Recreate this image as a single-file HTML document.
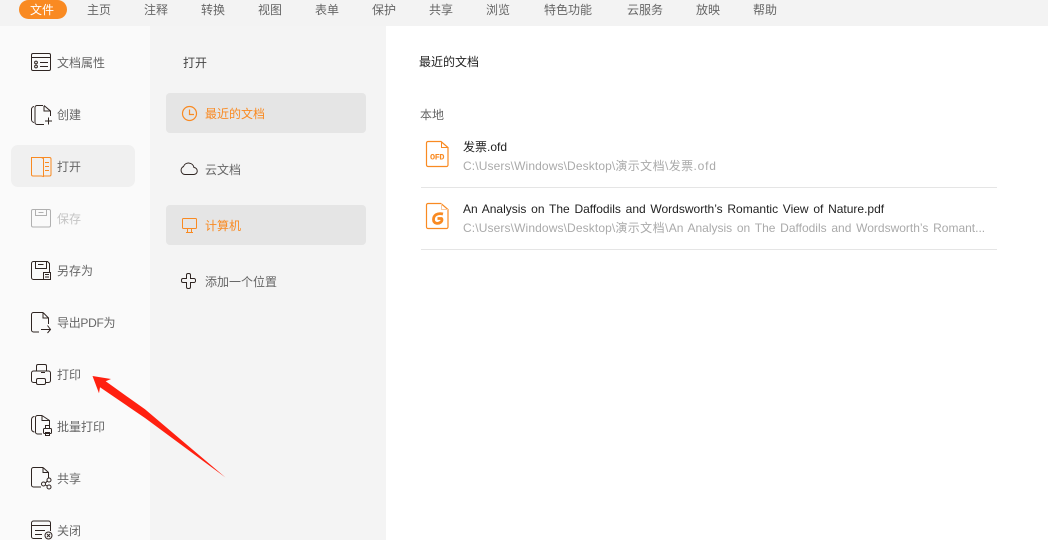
<!DOCTYPE html>
<html lang="zh">
<head>
<meta charset="utf-8">
<title>文件</title>
<style>
html,body{margin:0;padding:0;width:1048px;height:540px;overflow:hidden;background:#fff}
body{position:relative;font-family:"Liberation Sans","WenQuanYi Zen Hei","Noto Sans CJK SC",sans-serif;font-size:12px;color:#666}
.b{position:absolute}
.t{position:absolute;white-space:nowrap;line-height:16px;height:16px}
svg{position:absolute;left:0;top:0;overflow:visible}
.c{color:#666}
.o{color:#f98a22}
.k{color:#222}
.g{color:#aaa}
.cj{letter-spacing:.4px}
.la{letter-spacing:.12px}
</style>
</head>
<body>
<div class="b" style="left:0;top:0;width:1048px;height:26px;background:#f3f3f3"></div>
<div class="b" style="left:0;top:26px;width:150px;height:514px;background:#fafafa"></div>
<div class="b" style="left:150px;top:26px;width:236px;height:514px;background:#f4f4f4"></div>
<div class="b" style="left:19px;top:0;width:48px;height:19px;background:#f98a22;border-radius:10px"></div>
<div class="b" style="left:11px;top:145px;width:124px;height:42px;background:#f0f0f0;border-radius:7px"></div>
<div class="b" style="left:166px;top:93px;width:200px;height:40px;background:#e5e5e5;border-radius:4px"></div>
<div class="b" style="left:166px;top:205px;width:200px;height:40px;background:#e5e5e5;border-radius:4px"></div>
<div class="b" style="left:421px;top:187px;width:576px;height:1px;background:#e5e5e5"></div>
<div class="b" style="left:421px;top:249px;width:576px;height:1px;background:#e5e5e5"></div>

<div class="t" style="left:30px;top:2px;color:#fff">文件</div>
<div class="t c" style="left:87px;top:2px">主页</div>
<div class="t c" style="left:144px;top:2px">注释</div>
<div class="t c" style="left:201px;top:2px">转换</div>
<div class="t c" style="left:258px;top:2px">视图</div>
<div class="t c" style="left:315px;top:2px">表单</div>
<div class="t c" style="left:372px;top:2px">保护</div>
<div class="t c" style="left:429px;top:2px">共享</div>
<div class="t c" style="left:486px;top:2px">浏览</div>
<div class="t c" style="left:544px;top:2px">特色功能</div>
<div class="t c" style="left:627px;top:2px">云服务</div>
<div class="t c" style="left:696px;top:2px">放映</div>
<div class="t c" style="left:753px;top:2px">帮助</div>

<div class="t c" style="left:57px;top:55px">文档属性</div>
<div class="t c" style="left:57px;top:107px">创建</div>
<div class="t c" style="left:57px;top:159px">打开</div>
<div class="t" style="left:57px;top:211px;color:#c4c4c4">保存</div>
<div class="t c" style="left:57px;top:263px">另存为</div>
<div class="t c" style="left:57px;top:315px;letter-spacing:-.3px">导出PDF为</div>
<div class="t c" style="left:57px;top:367px">打印</div>
<div class="t c" style="left:57px;top:419px">批量打印</div>
<div class="t c" style="left:57px;top:471px">共享</div>
<div class="t c" style="left:57px;top:523px">关闭</div>

<div class="t" style="left:183px;top:55px;color:#444">打开</div>
<div class="t o" style="left:205px;top:106px">最近的文档</div>
<div class="t c" style="left:205px;top:162px">云文档</div>
<div class="t o" style="left:205px;top:218px">计算机</div>
<div class="t c" style="left:205px;top:274px">添加一个位置</div>

<div class="t k" style="left:419px;top:54px">最近的文档</div>
<div class="t c" style="left:420px;top:107px">本地</div>
<div class="t k" style="left:463px;top:139px">发票.ofd</div>
<div class="t g" style="left:463px;top:158px"><span class="la">C:\Users\Windows\Desktop\</span><span class="cj">演示文档\发票</span><span style="letter-spacing:.8px">.ofd</span></div>
<div class="t k" style="left:463px;top:201px;word-spacing:1.4px">An Analysis on The Daffodils and Wordsworth’s Romantic View of Nature.pdf</div>
<div class="t g" style="left:463px;top:220px;word-spacing:1.4px"><span class="la">C:\Users\Windows\Desktop\</span><span class="cj">演示文档\</span>An Analysis on The Daffodils and Wordsworth’s Romant...</div>

<svg width="1048" height="540" viewBox="0 0 1048 540" fill="none" stroke-width="1">
<g stroke="#2f2522">
<!-- 文档属性 -->
<rect x="31.5" y="53.5" width="19" height="17" rx="1.5"/>
<path d="M32 57.5H50M40 62.5H48M40 66.5H48"/>
<circle cx="36" cy="62.5" r="1.4"/><circle cx="36" cy="66.5" r="1.4"/>
<!-- 创建 -->
<path d="M43 105.5H37a2 2 0 0 0-2 2V122.5a2 2 0 0 0 2 2H44"/>
<path d="M34 106.5a3 3 0 0 0-2.500 3V119.500a3 3 0 0 0 2.500 3"/>
<path d="M44 105.500L50.500 111V116M44 106V111H50.500"/>
<path d="M48.500 117.500V124.500M45 121H52"/>
<!-- 另存为 -->
<path d="M43 279.500H33.500a2 2 0 0 1-2-2V263.500a2 2 0 0 1 2-2H47.500L49.500 263.500V272"/>
<path d="M35.500 262V268.500H46.500V262M38 264.500H43.500"/>
<rect x="43.500" y="272.500" width="7" height="7"/><path d="M45 274.500H49M45 277H49"/>
<!-- 导出PDF -->
<path d="M43 312.500H33.500a2 2 0 0 0-2 2V330a2 2 0 0 0 2 2H39M43 312.500V318H48.500V324M43 312.500L48.500 318"/>
<path d="M41 329.500H50.500M47.500 325.500L50.500 329.500L47.500 333"/>
<!-- 打印 -->
<path d="M36.500 371V366a1.500 1.500 0 0 1 1.500-1.500H45a1.500 1.500 0 0 1 1.500 1.500V371"/>
<path d="M36 382.500H33.500a2 2 0 0 1-2-2V373a2 2 0 0 1 2-2H48.500a2 2 0 0 1 2 2V380.500a2 2 0 0 1-2 2H46"/>
<rect x="36.500" y="378.500" width="9" height="6" rx="1.500"/><path d="M41 372.500H45"/>
<!-- 批量打印 -->
<path d="M42 415.500H37.500a2 2 0 0 0-2 2V432a2 2 0 0 0 2 2H42"/>
<path d="M34.500 416.500a3 3 0 0 0-3 3V429a3 3 0 0 0 3 3"/>
<path d="M42 415.500V420.500H49.500V426M42 415.500L49.500 420.500"/>
<rect x="43.500" y="428.500" width="8" height="5" rx="1"/><rect x="45.500" y="425.500" width="4" height="3"/><rect x="45.500" y="432.500" width="4" height="3"/>
<!-- 共享 -->
<path d="M43 467.500H33.500a2 2 0 0 0-2 2V485a2 2 0 0 0 2 2H41M43 467.500V472.500H48.500V478M43 467.500L48.500 472.500"/>
<circle cx="43.500" cy="484" r="2"/><circle cx="49" cy="480" r="2"/><circle cx="49" cy="487" r="2"/>
<path d="M45.500 483L47.300 481M45.500 485L47.300 486"/>
<!-- 关闭 -->
<path d="M42 538.500H33.500a2 2 0 0 1-2-2V523a2 2 0 0 1 2-2H48.500a2 2 0 0 1 2 2V531"/>
<path d="M32 525.500H50M35 530.500H45M35 534.500H42"/>
<circle cx="48.500" cy="535.500" r="3.500"/><path d="M47 534L50 537M50 534L47 537"/>
<!-- 云 -->
<path d="M185 174.500H193.500a3.500 3.500 0 0 0 .5-7a5.500 5.500 0 0 0-10.500-1a4.200 4.200 0 0 0 1.500 8z"/>
<!-- 添加 -->
<path d="M186.500 275a1.500 1.500 0 0 1 1.500-1.500h1a1.500 1.500 0 0 1 1.500 1.500v3.500H194a1.500 1.500 0 0 1 1.500 1.500v1a1.500 1.500 0 0 1-1.500 1.500H190.500V287a1.500 1.500 0 0 1-1.500 1.500h-1a1.500 1.500 0 0 1-1.500-1.500V282.500H183a1.500 1.500 0 0 1-1.500-1.500v-1a1.500 1.500 0 0 1 1.500-1.500h3.500z"/>
</g>
<!-- 保存 -->
<g stroke="#b0b0b0">
<rect x="31.500" y="209.500" width="19" height="17.500" rx="1.500"/>
<path d="M35.500 210V215.500H46.500V210M38.500 212.500H43.500"/>
</g>
<g stroke="#f98a22">
<!-- 打开 -->
<path d="M31.500 157.500H41.500L43.500 158.500V176.500L41.500 176H33a1.500 1.500 0 0 1-1.500-1.500z"/>
<path d="M41.500 157.500H49.500a1.500 1.500 0 0 1 1.500 1.500V174.500a1.500 1.500 0 0 1-1.500 1.500H43.500"/>
<path d="M45 162.500H49M45 166.500H49M45 170.500H49"/>
<!-- clock -->
<circle cx="189.500" cy="113.500" r="7" stroke-width="1.200"/>
<path d="M189.500 109.500V114.500H194" stroke-width="1.200"/>
<!-- monitor -->
<rect x="182.500" y="218.500" width="14" height="10" rx="1"/>
<path d="M186 232.500H193M187.500 229V232.500M191.500 229V232.500"/>
<!-- OFD file -->
<path d="M441 141.500H428a1.500 1.500 0 0 0-1.500 1.500V165a1.500 1.500 0 0 0 1.500 1.500H446.500a1.500 1.500 0 0 0 1.500-1.500V147.500z" stroke-width="1.200"/>
<path d="M441.500 141.500V147.500H448"/>
<!-- PDF file -->
<path d="M441 203.500H428a1.500 1.500 0 0 0-1.500 1.500V227a1.500 1.500 0 0 0 1.500 1.500H446.500a1.500 1.500 0 0 0 1.500-1.500V209.500z" stroke-width="1.200"/>
<path d="M441.500 203.500V209.500H448" stroke="#f9c9a0"/>
<path d="M443 214C437 212.500 433.500 215.500 433.500 219.500C433.500 223.500 438 224.500 441 222C442.500 220.500 442 219 441.500 218.500H437.500" stroke-width="2.800"/>
</g>
<text x="430" y="159.500" font-family="Liberation Mono,monospace" font-size="8.500" font-weight="bold" fill="#f98a22" textLength="14.500">OFD</text>
<!-- arrow -->
<path d="M92.500 376L111 379L105.700 381.300L145 409.300L225.500 477.500L145 418L100 387.300L99 393.300z" fill="#ff2010"/>
</svg>
</body>
</html>
